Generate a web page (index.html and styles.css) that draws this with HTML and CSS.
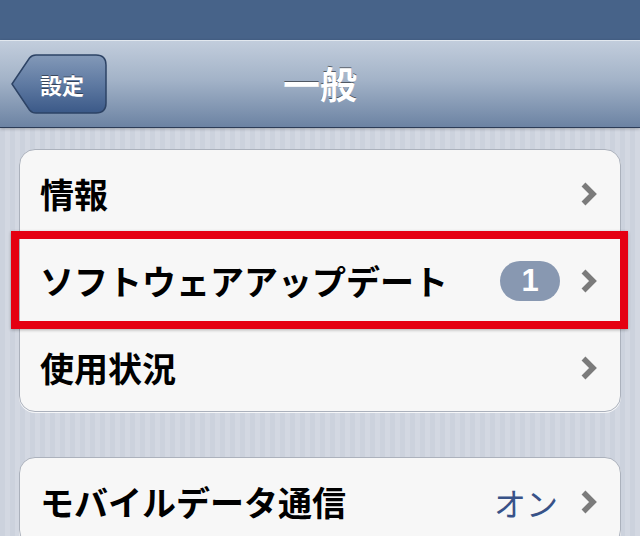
FILE: index.html
```html
<!DOCTYPE html>
<html lang="ja">
<head>
    <meta charset="UTF-8">
    <meta name="viewport" content="width=device-width, initial-scale=1.0">
    <title>一般</title>
    <link rel="stylesheet" href="styles.css">
</head>
<body>
    <div class="status-bar"></div>

    <header class="nav-bar">
        <a class="back-button" href="#">
            <svg class="back-shape" width="98" height="60" viewBox="0 0 98 60">
                <defs>
                    <linearGradient id="back-fill" x1="0" y1="0" x2="0" y2="1">
                        <stop offset="0" stop-color="#8399b8"/>
                        <stop offset="0.5" stop-color="#5f7aa2"/>
                        <stop offset="1" stop-color="#3b5988"/>
                    </linearGradient>
                </defs>
                <path d="M2 30 L19.5 4 Q22 1 26 1 L86 1 Q96 1 96 11 L96 49 Q96 59 86 59 L26 59 Q22 59 19.5 56 Z" fill="url(#back-fill)" stroke="#2d4365" stroke-width="1.5"/>
            </svg>
            <span class="back-label">設定</span>
        </a>
        <h1 class="nav-title">一般</h1>
        <div></div>
    </header>

    <main class="content">
        <!-- General -->
        <ul class="group">
            <li class="row">
                <span class="label">情報</span>
                <span class="accessory">
                    <svg class="chevron" width="18" height="26" viewBox="0 0 18 26"><path d="M3.5 3.5 L13 13 L3.5 22.5" /></svg>
                </span>
            </li>
            <li class="row highlighted">
                <span class="label">ソフトウェアアップデート</span>
                <span class="accessory">
                    <span class="badge">1</span>
                    <svg class="chevron" width="18" height="26" viewBox="0 0 18 26"><path d="M3.5 3.5 L13 13 L3.5 22.5" /></svg>
                </span>
            </li>
            <li class="row">
                <span class="label">使用状況</span>
                <span class="accessory">
                    <svg class="chevron" width="18" height="26" viewBox="0 0 18 26"><path d="M3.5 3.5 L13 13 L3.5 22.5" /></svg>
                </span>
            </li>
        </ul>

        <!-- Network -->
        <ul class="group">
            <li class="row">
                <span class="label">モバイルデータ通信</span>
                <span class="accessory">
                    <span class="value">オン</span>
                    <svg class="chevron" width="18" height="26" viewBox="0 0 18 26"><path d="M3.5 3.5 L13 13 L3.5 22.5" /></svg>
                </span>
            </li>
        </ul>
    </main>
</body>
</html>
```

FILE: styles.css
```css
body {
    margin: 0;
    height: 536px;
    overflow: hidden;
    font-family: "Noto Sans CJK JP", sans-serif;
    background-color: #cfd5df;
    background-image: repeating-linear-gradient(90deg, #ccd2dd 0, #ccd2dd 5px, #d3d8e2 5px, #d3d8e2 10px);
}
.status-bar {
    height: 40px;
    background-color: #476389;
}
.nav-bar {
    height: 86px;
    display: grid;
    grid-template-columns: 1fr auto 1fr;
    align-items: center;
    padding: 0 10px;
    border-top: 1px solid #e2e8ef;
    border-bottom: 1px solid #2c3c57;
    background: linear-gradient(#c2cddc, #a3b3c8 45%, #6c83a3);
    box-shadow: 0 1px 3px rgba(0, 0, 0, 0.25);
    position: relative;
}
.back-button {
    position: relative;
    justify-self: start;
    width: 98px;
    height: 60px;
    margin-top: -1px;
    display: flex;
    align-items: center;
    padding-left: 30px;
    box-sizing: border-box;
    text-decoration: none;
}
.back-shape {
    position: absolute;
    left: 0;
    top: 0;
}
.back-label {
    position: relative;
    color: white;
    font-size: 22px;
    font-weight: 700;
    text-shadow: 0 -1px 0 rgba(0, 0, 0, 0.45);
}
.nav-title {
    margin: 0 0 2px 0;
    color: white;
    font-size: 37px;
    font-weight: 700;
    text-shadow: 0 -1px 0 rgba(0, 0, 0, 0.5);
}
.content {
    padding: 21px 19px;
}
.group {
    list-style: none;
    margin: 0 0 45px 0;
    padding: 0;
    background-color: #f7f7f7;
    border: 1px solid #abb1bc;
    border-radius: 16px;
    box-shadow: 0 1px 0 rgba(255, 255, 255, 0.8);
}
.row {
    height: 87px;
    box-sizing: border-box;
    display: flex;
    align-items: center;
    justify-content: space-between;
    padding: 0 22px 0 20px;
}
.row + .row {
    border-top: 1px solid #b9bec7;
}
.label {
    font-size: 34px;
    font-weight: 700;
    color: #000;
    line-height: 1;
}
.accessory {
    display: flex;
    align-items: center;
}
.chevron path {
    fill: none;
    stroke: #7b7b7b;
    stroke-width: 5.5;
}
.badge {
    min-width: 60px;
    height: 40px;
    border-radius: 20px;
    background-color: #8898b1;
    color: white;
    font-family: "Liberation Sans", Arial, sans-serif;
    font-size: 31px;
    font-weight: 700;
    display: flex;
    align-items: center;
    justify-content: center;
    margin-right: 20px;
}
.value {
    font-size: 32px;
    color: #385288;
    margin-right: 22px;
    line-height: 1;
}
.highlighted {
    position: relative;
}
.highlighted::after {
    content: '';
    position: absolute;
    left: -9px;
    right: -8px;
    top: -7px;
    bottom: -5px;
    border: 8px solid #e50012;
    box-shadow: 0 1px 3px rgba(0, 0, 0, 0.3);
}
```
